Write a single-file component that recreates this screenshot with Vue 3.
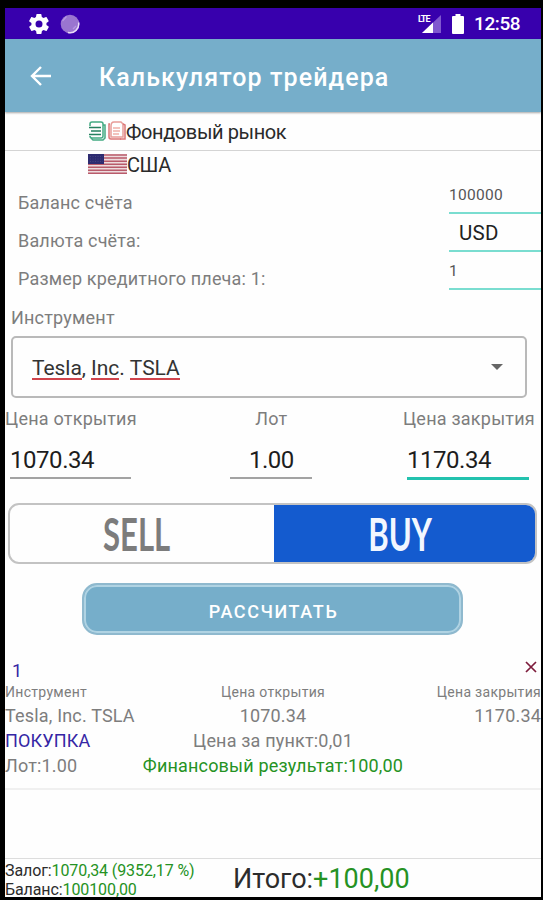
<template>
    <div class="phone">
        <div class="status_bar">
            <svg class="gear" viewBox="2 2 20 20" width="20" height="20">
                <path fill="#fff" fill-rule="evenodd" d="M19.4 13c0-.3.1-.6.1-1s0-.7-.1-1l2.1-1.6c.2-.2.2-.4.1-.6l-2-3.500c-.1-.2-.4-.3-.6-.2l-2.500 1c-.5-.4-1.100-.7-1.700-1l-.4-2.600c0-.2-.2-.4-.5-.4h-4c-.2 0-.5.2-.5.4l-.4 2.600c-.6.3-1.200.6-1.700 1l-2.500-1c-.2-.1-.5 0-.6.2l-2 3.500c-.1.2-.1.5.1.6L4.500 11c0 .3-.1.6-.1 1s0 .7.1 1l-2.100 1.600c-.2.2-.2.4-.1.6l2 3.500c.1.2.4.3.6.2l2.500-1c.5.4 1.100.7 1.700 1l.4 2.600c0 .2.2.4.5.4h4c.2 0 .5-.2.5-.4l.4-2.600c.6-.3 1.200-.6 1.700-1l2.500 1c.2.1.5 0 .6-.2l2-3.500c.1-.2.1-.5-.1-.6L19.400 13zM12 15.500a3.500 3.500 0 1 1 0-7 3.500 3.500 0 0 1 0 7z"/>
            </svg>
            <svg class="sync" viewBox="0 0 20 20" width="20" height="20">
                <circle cx="10" cy="10" r="9.300" fill="#9a75d0"/>
                <path d="M18.600 8.500a8.700 8.700 0 0 1-10.600 10" fill="none" stroke="#e9dcf8" stroke-width="1.500"/>
                <path d="M2.500 7l4-4.500M13 15l3-3" stroke="#b797e2" stroke-width="1.300"/>
            </svg>
            <span class="spacer"></span>
            <div class="signal">
                <svg viewBox="0 0 19 18" width="19" height="18">
                    <path d="M0 18L19 0v18z" fill="#8058cf"/>
                    <path d="M0 18L11 7.600V18z" fill="#fff"/>
                </svg>
                <span>LTE</span>
            </div>
            <svg class="battery" viewBox="0 0 12 20" width="12" height="20">
                <path fill="#fff" d="M3.500 0h5v2H11a1 1 0 0 1 1 1v16a1 1 0 0 1-1 1H1a1 1 0 0 1-1-1V3a1 1 0 0 1 1-1h2.500z"/>
            </svg>
            <span class="clock">12:58</span>
        </div>

        <header class="toolbar">
            <svg viewBox="0 0 22 20" width="22" height="20">
                <path d="M21 10H2M11 1L2 10l9 9" fill="none" stroke="#fff" stroke-width="2.400"/>
            </svg>
            <h1>Калькулятор трейдера</h1>
        </header>

        <div class="market">
            <svg viewBox="0 0 38 20" width="38" height="20">
                <g fill="none" stroke="#43aa83" stroke-width="1.500">
                    <path d="M4 1h9q2 0 2 2v12q0 2-2 2H4q-2 0-2-2"/>
                    <path d="M2 5V3q0-2 2-2M15 4h2v13l-2 2H5l-2-2"/>
                    <path d="M1 6.500h12M3 10h10M1 13.500h12" stroke="#24815f" stroke-width="1.700"/>
                </g>
                <g fill="none" stroke="#dc7777" stroke-width="1.500">
                    <path d="M22 3h-1v13q0 2 2 2h10"/>
                    <path d="M23 5q0-4 3-4h7l2 2v13H23z" stroke="#e79c98"/>
                    <path d="M25 7h7M25 10h7M25 13h6" stroke="#efb0a8"/>
                    <path d="M35 3l2 1v14h-5"/>
                </g>
            </svg>
            <span>Фондовый рынок</span>
        </div>
        <div class="country">
            <svg viewBox="0 0 39 20" width="39" height="20">
                <rect width="39" height="20" fill="#eddcde"/>
                <path d="M0 1h39M0 4.100h39M0 7.200h39M0 10.200h39M0 13.200h39M0 16.200h39M0 19.200h39" stroke="#b95b6b" stroke-width="1.500"/>
                <rect width="16" height="10" fill="#2d2b70"/>
                <path d="M2 2.500h13M2 5h13M2 7.500h13" stroke="#45437f" stroke-width="1" stroke-dasharray="1 1.500"/>
            </svg>
            <span>США</span>
        </div>

        <div class="account">
            <div v-for="row in account" :key="row.label" class="account_row">
                <label>{{ row.label }}</label>
                <div class="account_value" :class="row.name">{{ row.value }}</div>
            </div>
        </div>

        <p class="instrument_label">Инструмент</p>
        <div class="select">
            <p><u>Tesla</u>, <u>Inc</u>. <u>TSLA</u></p>
            <svg viewBox="0 0 12 6" width="12" height="6"><path d="M0 0h12L6 6z" fill="#666"/></svg>
        </div>

        <div class="prices">
            <div class="price open">
                <label>Цена открытия</label>
                <div class="field">{{ openPrice }}</div>
            </div>
            <div class="price lot">
                <label>Лот</label>
                <div class="field">{{ lot }}</div>
            </div>
            <div class="price close">
                <label>Цена закрытия</label>
                <div class="field">{{ closePrice }}</div>
            </div>
        </div>

        <div class="side_switch">
            <button :class="{ active: side === 'sell' }" @click="side = 'sell'"><span>SELL</span></button>
            <button :class="{ active: side === 'buy' }" @click="side = 'buy'"><span>BUY</span></button>
        </div>

        <button class="calculate"><span>РАССЧИТАТЬ</span></button>

        <div class="result">
            <div class="result_head">
                <span>1</span>
                <svg viewBox="0 0 12 12" width="12" height="12"><path d="M1 1l10 10M11 1L1 11" stroke="#7d1c3c" stroke-width="1.700"/></svg>
            </div>
            <div class="result_row small">
                <span>Инструмент</span>
                <span>Цена открытия</span>
                <span>Цена закрытия</span>
            </div>
            <div class="result_row">
                <span>Tesla, Inc. TSLA</span>
                <span>{{ openPrice }}</span>
                <span>{{ closePrice }}</span>
            </div>
            <div class="result_row">
                <span class="deal">ПОКУПКА</span>
                <span>Цена за пункт:0,01</span>
                <span></span>
            </div>
            <div class="result_row">
                <span>Лот:{{ lot }}</span>
                <span class="profit">Финансовый результат:100,00</span>
                <span></span>
            </div>
        </div>

        <footer class="total">
            <div class="margin">
                <p>Залог:<b>1070,34 (9352,17 %)</b></p>
                <p>Баланс:<b>100100,00</b></p>
            </div>
            <p class="sum">Итого:<b>+100,00</b></p>
        </footer>
    </div>
</template>

<script setup>
import {ref} from 'vue'

const account = [
    {name: 'money', label: 'Баланс счёта', value: '100000'},
    {name: 'currency', label: 'Валюта счёта:', value: 'USD'},
    {name: 'leverage', label: 'Размер кредитного плеча: 1:', value: '1'},
]

const openPrice = ref('1070.34')
const closePrice = ref('1170.34')
const lot = ref('1.00')
const side = ref('buy')
</script>

<style>
body {
    margin: 0;
    background: #000;
}
</style>

<style scoped>
.phone {
    display: flex;
    flex-direction: column;
    box-sizing: border-box;
    width: 543px;
    height: 900px;
    border: solid #000;
    border-width: 8px 2px 3px 5px;
    background: #fefefe;
    font-family: Roboto, sans-serif;
    color: #7d7d7d;
    overflow: hidden;
    white-space: nowrap;
}

p, h1 {
    margin: 0;
    font-weight: 400;
}

b {
    font-weight: 400;
    color: #259223;
}

svg {
    display: block;
    flex: none;
}

button {
    padding: 0;
    border: 0;
    font-family: inherit;
}

/* status bar */
.status_bar {
    display: flex;
    align-items: center;
    flex: none;
    height: 31px;
    padding: 0 21px 0 24px;
    background: #3800ad;
    color: #fff;
}

.sync {
    margin-left: 11px;
}

.spacer {
    flex: 1;
}

.signal {
    position: relative;
    margin-right: 11px;
}

.signal span {
    position: absolute;
    left: -5px;
    top: 0;
    padding: 0 1px;
    background: #3800ad;
    font-size: 9px;
    line-height: 8px;
    font-weight: 700;
    letter-spacing: -1px;
}

.clock {
    width: 46px;
    margin-left: 10px;
    font-size: 19px;
    font-weight: 500;
    line-height: 33px;
    letter-spacing: -0.4px;
}

/* toolbar */
.toolbar {
    display: flex;
    align-items: center;
    flex: none;
    height: 73px;
    padding-left: 25px;
    background: #76aeca;
    box-shadow: 0 1px 2px rgba(0, 0, 0, .35);
}

.toolbar h1 {
    margin: 3px 0 0 47px;
    color: #fff;
    font-size: 25px;
    font-weight: 500;
    letter-spacing: 1.1px;
}

.market, .country {
    display: flex;
    align-items: center;
    flex: none;
    padding-left: 83px;
    color: #2a2a2a;
    font-size: 20px;
    letter-spacing: -0.4px;
}

.market {
    height: 38px;
    border-bottom: 1px solid #d4d4d4;
}

.market span {
    padding-top: 2px;
}

.country {
    height: 25px;
}

.country span {
    padding-top: 3px;
}

/* account */
.account_row {
    display: flex;
    justify-content: space-between;
    height: 38px;
    padding-left: 13px;
}

.account_row label {
    padding-top: 8px;
    font-size: 18px;
    line-height: 38px;
    letter-spacing: 0.17px;
}

.account_value {
    box-sizing: border-box;
    width: 92px;
    height: 38px;
    border-bottom: 2px solid #7addd0;
    color: #555;
    font-size: 15.5px;
    line-height: 39px;
    letter-spacing: 0.3px;
}

.account_value.currency {
    padding-left: 10px;
    color: #222;
    font-size: 20.5px;
}

/* instrument */
.instrument_label {
    height: 46px;
    padding-left: 6px;
    font-size: 18px;
    line-height: 55px;
    letter-spacing: 0.2px;
}

.select {
    display: flex;
    align-items: center;
    justify-content: space-between;
    box-sizing: border-box;
    flex: none;
    height: 62px;
    margin: 0 14px 0 6px;
    padding: 0 22px 0 19px;
    border: 2px solid #b9b9b9;
    border-radius: 5px;
    color: #333;
    font-size: 21px;
    letter-spacing: -0.05px;
}

.select p {
    padding-top: 1px;
}

.select u {
    display: inline-block;
    border-bottom: 2px solid #d0444c;
    line-height: 20px;
    text-decoration: none;
}

/* prices */
.prices {
    display: flex;
    justify-content: space-between;
    height: 81px;
    padding-right: 6px;
}

.price {
    display: flex;
    flex-direction: column;
    font-size: 18px;
    letter-spacing: 0.23px;
}

.price label {
    line-height: 41px;
}

.field {
    box-sizing: border-box;
    height: 40px;
    margin-left: 5px;
    width: 121px;
    border-bottom: 2px solid #a3a3a3;
    color: #1d1d1d;
    font-size: 24px;
    line-height: 42px;
    letter-spacing: -0.45px;
}

.lot {
    align-items: center;
    padding-left: 3px;
}

.lot .field {
    margin: 0;
    width: 82px;
    text-align: center;
}

.close .field {
    height: 41px;
    width: 122px;
    margin-left: 4px;
    border-bottom: 3px solid #23c2ae;
}

/* sell / buy */
.side_switch {
    display: flex;
    box-sizing: border-box;
    flex: none;
    height: 61px;
    margin: 24px 4px 0 3px;
    border: 2px solid #c3c3c3;
    border-radius: 11px;
    overflow: hidden;
}

.side_switch button {
    flex: 1;
    padding-right: 11px;
    background: transparent;
    color: #7c7c7c;
    font-family: Lato, sans-serif;
    font-size: 45px;
    line-height: 56px;
}

.side_switch button.active {
    margin: -2px -2px -2px 0;
    background: #145bcf;
    color: #f2f7ff;
}

.side_switch span {
    display: inline-block;
    font-weight: 700;
    transform: scaleX(.69);
}

/* calculate */
.calculate {
    flex: none;
    box-sizing: border-box;
    width: 381px;
    height: 52px;
    margin: 19px 0 0 77px;
    padding: 1px;
    border: 2px solid #8fb9ce;
    border-radius: 15px;
    background: #76aeca;
    box-shadow: inset 0 0 0 2px #b0d3e3;
    color: #fff;
    font-size: 18px;
    font-weight: 500;
    letter-spacing: 1.600px;
}

.calculate span {
    position: relative;
    top: 2px;
    left: 1px;
}

/* result */
.result {
    flex: none;
    height: 153px;
    border-bottom: 2px solid #f0f0f0;
}

.result_head {
    display: flex;
    justify-content: space-between;
    height: 46px;
    padding: 0 4px 0 7px;
    color: #3526a5;
    font-size: 18px;
    line-height: 71px;
}

.result_head svg {
    margin-top: 26px;
}

.result_row {
    display: grid;
    grid-template-columns: 1fr auto 1fr;
    height: 25px;
    font-size: 18px;
    line-height: 25px;
    letter-spacing: 0.18px;
}

.result_row.small {
    height: 22px;
    font-size: 14px;
    line-height: 23px;
    letter-spacing: 0.3px;
}

.result_row span:last-child {
    text-align: right;
}

.result_row .deal {
    color: #3526a5;
}

.result_row .profit {
    color: #259223;
}

/* total */
.total {
    display: flex;
    flex: none;
    height: 38px;
    margin-top: auto;
    border-top: 1px solid #ddd;
    color: #2c2c2c;
}

.margin {
    width: 228px;
    padding-top: 2px;
    font-size: 16px;
    line-height: 19px;
    letter-spacing: -0.1px;
}

.sum {
    font-size: 27px;
    line-height: 41px;
}
</style>
